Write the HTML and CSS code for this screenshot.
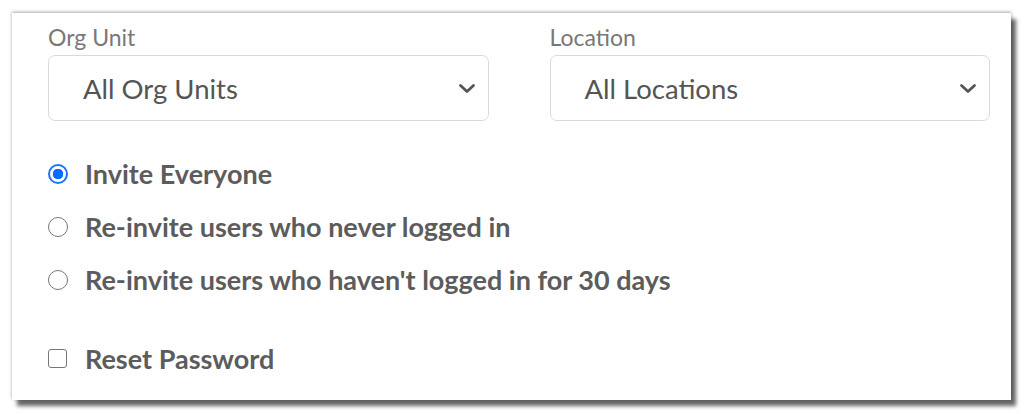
FILE: index.html
```html
<!DOCTYPE html>
<html lang="en-US">

<head>
    <title>Invite Users</title>
    <meta name="viewport" content="width=device-width, initial-scale=1.0" />
    <link rel="stylesheet" href="styles.css">
</head>

<body>
    <div class="panel">
        <div class="filters">
            <div class="field">
                <label class="field-label">Org Unit</label>
                <div class="select">
                    <span>All Org Units</span>
                    <svg class="chevron" width="18" height="11" viewBox="0 0 18 11">
                        <path d="M2.5 2.5 L9 8.5 L15.5 2.5" fill="none" stroke="#555" stroke-width="2.8" stroke-linecap="round" stroke-linejoin="round" />
                    </svg>
                </div>
            </div>
            <div class="field">
                <label class="field-label">Location</label>
                <div class="select">
                    <span>All Locations</span>
                    <svg class="chevron" width="18" height="11" viewBox="0 0 18 11">
                        <path d="M2.5 2.5 L9 8.5 L15.5 2.5" fill="none" stroke="#555" stroke-width="2.8" stroke-linecap="round" stroke-linejoin="round" />
                    </svg>
                </div>
            </div>
        </div>

        <ul class="options">
            <li class="option"><span class="radio checked"></span>Invite Everyone</li>
            <li class="option"><span class="radio"></span>Re-invite users who never logged in</li>
            <li class="option"><span class="radio"></span>Re-invite users who haven't logged in for 30 days</li>
        </ul>

        <div class="option reset"><span class="checkbox"></span>Reset Password</div>
    </div>
</body>

</html>
```

FILE: styles.css
```css
html {
    font-family: Lato, "Liberation Sans", sans-serif;
    color: #555;
    background-color: #fff;
}

body {
    margin: 0;
    padding: 13px 0 0 12px;
    height: 414px;
    box-sizing: border-box;
    overflow: hidden;
}

.panel {
    width: 999px;
    height: 387px;
    box-sizing: border-box;
    padding: 13px 21px 0 36px;
    background: #fff;
    box-shadow: 0 -1px 3px rgba(0, 0, 0, 0.35), 5px 6px 4px rgba(0, 0, 0, 0.6);
}

.filters {
    display: grid;
    grid-template-columns: 1fr 1fr;
    column-gap: 61px;
}

.field-label {
    display: block;
    font-size: 23px;
    line-height: 22px;
    color: #787878;
    margin-bottom: 7px;
}

.select {
    display: flex;
    align-items: center;
    justify-content: space-between;
    height: 66px;
    box-sizing: border-box;
    padding: 0 12px 0 34px;
    border: 1px solid #dadada;
    border-radius: 7px;
    font-size: 27.5px;
    color: #555;
}

.options {
    list-style: none;
    margin: 26px 0 0 0;
    padding: 0;
}

.option {
    display: flex;
    align-items: center;
    height: 53px;
    font-size: 27px;
    font-weight: 700;
    color: #5c5c5c;
}

.radio {
    width: 20px;
    height: 20px;
    box-sizing: border-box;
    border: 1.5px solid #777;
    border-radius: 50%;
    margin: 0 17px 0 0;
    flex: none;
}

.radio.checked {
    border: 2px solid #1a73ff;
    background: radial-gradient(circle, #0a6cff 0 5px, #fff 5.5px);
}

.reset {
    margin-top: 26px;
}

.checkbox {
    width: 19px;
    height: 19px;
    box-sizing: border-box;
    border: 1.5px solid #777;
    border-radius: 3px;
    margin: 0 18px 0 0;
    flex: none;
}
```
